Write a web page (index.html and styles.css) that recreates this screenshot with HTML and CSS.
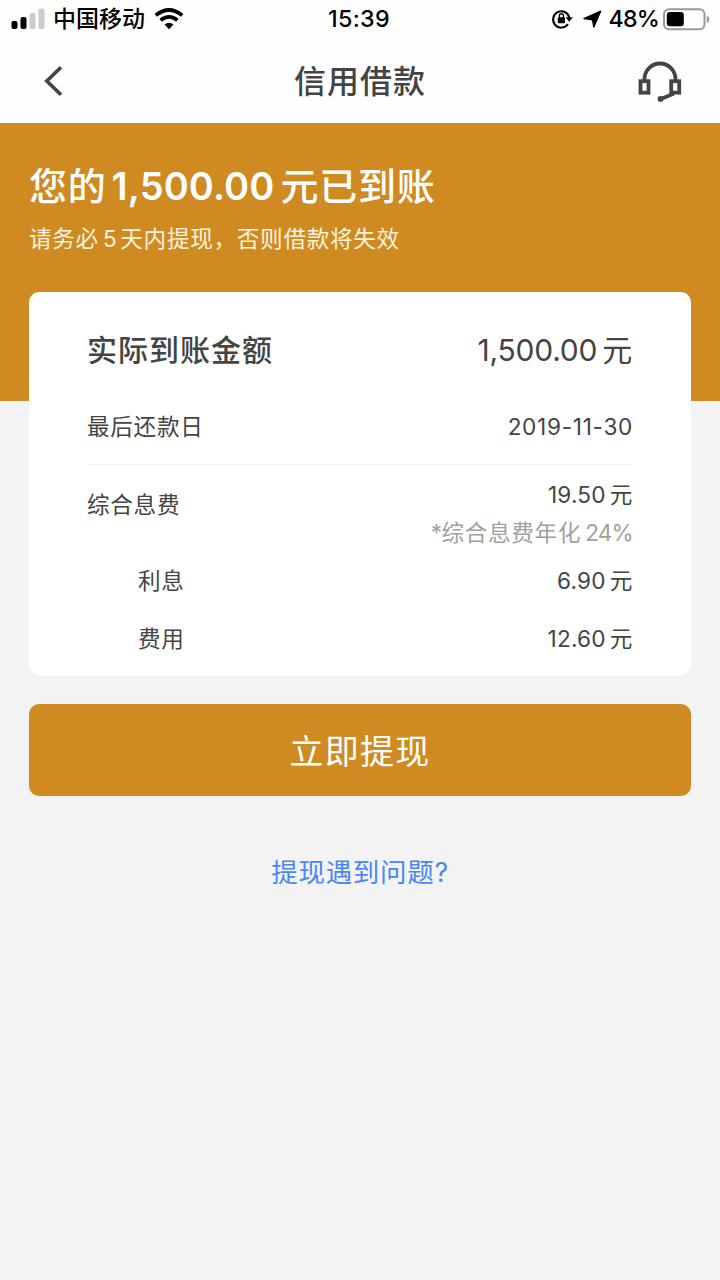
FILE: index.html
```html
<!DOCTYPE html>
<html lang="zh-CN">
<head>
<meta charset="utf-8">
<title>信用借款</title>
<link rel="stylesheet" href="styles.css">
</head>
<body>
<div class="status">
  <div class="status-left">
    <svg class="signal" width="34" height="22" viewBox="0 0 34 22"><rect x="0.5" y="13" width="6" height="8" rx="2"/><rect x="9.5" y="9" width="6" height="12" rx="2"/><rect class="dim" x="18.5" y="5" width="6" height="16" rx="2"/><rect class="dim" x="27.5" y="0.500" width="6" height="20.500" rx="2"/></svg>
    <span class="carrier">中国移动</span>
    <svg class="wifi" width="30" height="22" viewBox="0 0 30 22"><path class="arc" d="M1.800 7.400Q15 -3.400 28.200 7.400M6.600 12.200Q15 5.600 23.400 12.200"/><path d="M10.500 16.400Q15 13.200 19.500 16.400L15 21.200Z"/></svg>
  </div>
  <span class="clock">15:39</span>
  <div class="status-right">
    <svg class="lock" width="21" height="20" viewBox="0 0 21 20"><path class="ring" d="M16 15.200A8.200 8.200 0 1 1 17.300 8.500"/><path d="M13.600 8.200H20.800L17.200 12.800Z"/><rect x="5.800" y="8.300" width="7.200" height="5.900" rx="0.800"/><path class="shackle" d="M7.400 8.700V6.800a2 2 0 0 1 4 0V8.700"/></svg>
    <svg class="arrow" width="19" height="19" viewBox="0 0 19 19"><path d="M17.600 1.200L10.800 17L9.600 9.800L1 8.600Z"/></svg>
    <span class="percent">48%</span>
    <svg class="battery" width="47" height="23" viewBox="0 0 47 23"><rect class="shell" x="1" y="1.200" width="40.500" height="20" rx="5"/><rect x="3.800" y="4" width="17" height="14.300" rx="3"/><path class="cap" d="M43.800 7.500Q46.300 8.500 46.300 11.200Q46.300 14 43.800 15Z"/></svg>
  </div>
</div>
<header class="nav">
  <svg class="back" width="20" height="32" viewBox="0 0 20 32"><path d="M18 2.200L3.800 16L18 29.800"/></svg>
  <h1 class="title">信用借款</h1>
  <svg class="service" width="44" height="42" viewBox="0 0 44 42"><path class="band" d="M6.500 20V19a15.500 15.500 0 0 1 31 0V20"/><rect x="2.500" y="21.200" width="8" height="11.500"/><rect x="33.200" y="21.200" width="8" height="11.500"/><path class="mic" d="M36 33.500L23.500 38.800"/><circle cx="22.500" cy="38.900" r="2.900"/></svg>
</header>
<section class="hero">
  <h2 class="hero-title">您的<span class="num">1,500.00</span>元已到账</h2>
  <p class="hero-note">请务必<span class="num">5</span>天内提现，否则借款将失效</p>
</section>
<main class="content">
  <section class="card">
    <div class="row total"><span class="total-label">实际到账金额</span><span class="value"><span class="num">1,500.00</span>元</span></div>
    <div class="row due"><span>最后还款日</span><span class="date">2019-11-30</span></div>
    <div class="row cost">
      <span class="cost-label">综合息费</span>
      <div class="cost-values"><span class="value"><span class="num">19.50</span>元</span><span class="rate"><span class="star">*</span>综合息费年化<span class="num">24%</span></span></div>
    </div>
    <div class="row sub"><span>利息</span><span class="value"><span class="num">6.90</span>元</span></div>
    <div class="row sub"><span>费用</span><span class="value"><span class="num">12.60</span>元</span></div>
  </section>
  <button class="withdraw" type="button">立即提现</button>
  <a class="help">提现遇到问题?</a>
</main>
</body>
</html>
```

FILE: styles.css
```css
* { box-sizing: border-box; }
body {
  margin: 0;
  min-height: 1280px;
  background: #f3f3f3;
  color: #444;
  font-family: Inter, "Noto Sans CJK SC", sans-serif;
  font-size: 22.6px;
  line-height: 38px;
  letter-spacing: 0.7px;
  white-space: nowrap;
}
h1, h2, p { margin: 0; }
svg { display: block; flex: none; overflow: visible; }

.status {
  display: grid;
  grid-template-columns: 1fr auto 1fr;
  align-items: center;
  height: 38px;
  padding: 0 10px 0 11px;
  background: #fefefe;
  color: #000;
  letter-spacing: 0;
}
.status-left, .status-right { display: flex; align-items: center; }
.status-right { justify-content: flex-end; }
.signal .dim { fill: #ccc; }
.carrier { margin-left: 8px; font-size: 23px; font-weight: 500; }
.wifi { margin-left: 9px; }
.wifi .arc { fill: none; stroke: #000; stroke-width: 3.8; }
.clock { margin-right: 3px; font-size: 23.3px; font-weight: 500; letter-spacing: 0.3px; }
.lock .ring { fill: none; stroke: #000; stroke-width: 2; }
.lock .shackle { fill: none; stroke: #000; stroke-width: 1.4; }
.arrow { margin-left: 10px; }
.arrow path { stroke: #000; stroke-width: 1.4; stroke-linejoin: round; }
.percent { margin: 0 4px 0 7px; font-size: 23.2px; font-weight: 500; letter-spacing: -0.8px; }
.battery .shell { fill: none; stroke: #999; stroke-width: 2; }
.battery .cap { fill: #999; }

.nav {
  display: flex;
  align-items: center;
  justify-content: space-between;
  height: 85px;
  padding: 0 38px 0 43px;
  background: #fefefe;
}
.back { margin-right: 19px; }
.back path { fill: none; stroke: #444; stroke-width: 3.6; }
.title { padding-top: 2px; font-size: 32px; font-weight: 500; letter-spacing: 1px; }
.service .band, .service .mic, .service rect { fill: none; stroke: #444; stroke-width: 3.8; }
.service circle { fill: #444; }

.hero {
  height: 278px;
  padding: 36px 29px 0;
  background: #cf8a21;
  color: #fff;
}
.hero-title { font-size: 38px; font-weight: 500; line-height: 54px; letter-spacing: 0.8px; }
.hero-title .num { margin: 0 6px 0 5px; font-weight: 600; letter-spacing: 0.1px; }
.hero-note { margin-top: 7px; color: #fff3dc; }
.hero-note .num { margin: 0 3px 0 4px; }

.content { display: flex; flex-direction: column; padding: 0 29px; margin-top: -109px; }
.card { height: 383px; padding: 0 58px; background: #fff; border-radius: 10px; }
.row { display: flex; justify-content: space-between; }
.value .num { margin-right: 4px; letter-spacing: 0.2px; }
.total { height: 116px; align-items: center; font-size: 30px; }
.total .num { margin-right: 5px; letter-spacing: -0.2px; }
.total-label { font-weight: 500; letter-spacing: 1px; }
.due { height: 57px; border-bottom: 1px solid #f5f5f5; }
.cost { height: 87px; }
.cost-label { padding-top: 21px; }
.cost-values { display: flex; flex-direction: column; align-items: flex-end; padding-top: 11px; }
.rate { color: #a0a0a0; }
.rate .star { letter-spacing: -0.7px; }
.rate .num { margin-left: 4px; letter-spacing: -0.8px; }
.sub { height: 57.500px; align-items: center; padding: 1px 0 0 51px; }

.withdraw {
  height: 92px;
  margin-top: 29px;
  padding: 4px 0 0;
  border: 0;
  border-radius: 10px;
  background: #cf8a21;
  color: #fff;
  font: inherit;
  font-size: 34px;
  letter-spacing: 1.2px;
}
.help { margin-top: 57px; align-self: center; color: #4a87f0; font-size: 26.5px; }
```
